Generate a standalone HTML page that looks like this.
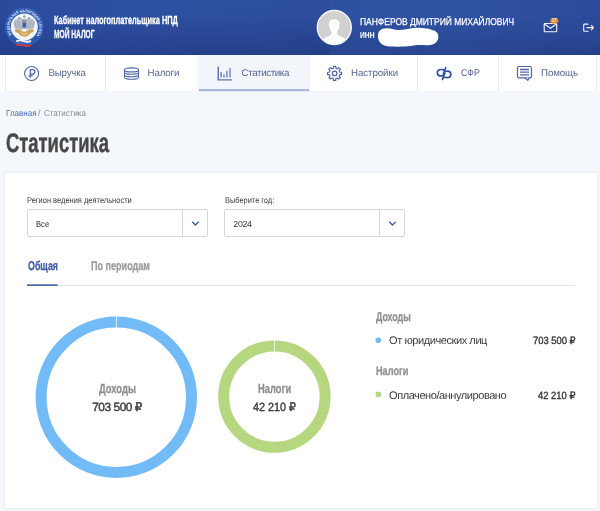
<!DOCTYPE html>
<html lang="ru">
<head>
<meta charset="utf-8">
<title>Статистика</title>
<style>
*{box-sizing:border-box;margin:0;padding:0}
html,body{width:600px;height:511px;overflow:hidden;background:#f4f7fb;font-family:"Liberation Sans","DejaVu Sans",sans-serif}
.a{position:absolute}
.t{position:absolute;white-space:nowrap;transform-origin:0 0;text-rendering:geometricPrecision}
.hdr{left:0;top:0;width:600px;height:55px;background:linear-gradient(180deg,rgba(24,40,105,0) 30%,rgba(24,40,105,.30) 100%),linear-gradient(168deg,rgba(30,50,120,0) 35%,rgba(24,40,105,.22) 100%) 0 0/330px 55px no-repeat,linear-gradient(90deg,#2a499b 0%,#2d4ea1 12%,#2e51a2 35%,#2f52a1 78%,#2b4b9a 100%)}
.nav{left:0;top:55px;width:600px;height:36px;background:#fff}
.dv{top:55px;width:1px;height:36px;background:#e8ecf2}
.act{left:198.5px;top:55px;width:110px;height:36.3px;background:#f2f5fa;border-bottom:2px solid #a9b7d9;box-shadow:0 0 2px rgba(60,80,130,.25)}
.card{left:5px;top:173px;width:591.5px;height:334.5px;background:#fff;box-shadow:0 0 3px rgba(100,120,160,.12)}
.sel{top:209px;height:28px;border:1px solid #d5d8dd;border-radius:2px;background:#fff}
.sel i{position:absolute;right:24.5px;top:0;width:1px;height:26px;background:#d5d8dd}
.tl{position:absolute;left:0;top:0;width:600px;height:511px;will-change:transform}
</style>
</head>
<body>
<div class="a hdr"></div>
<svg class="a" style="left:0;top:0" width="600" height="55" viewBox="0 0 600 55">
  <!-- logo -->
  <g>
    <circle cx="24.300" cy="27" r="18.800" fill="#2c59b0" stroke="#4f77c6" stroke-width="0.500"/>
    <circle cx="24.300" cy="27" r="13.500" fill="#f3f5f9"/>
    <path id="lp" d="M 11.800 34.800 A 14.700 14.700 0 1 1 36.800 34.800" fill="none"/>
    <text font-family="Liberation Sans, sans-serif" font-size="4" font-weight="bold" fill="#dfe7f8" textLength="63" lengthAdjust="spacingAndGlyphs"><textPath href="#lp" startOffset="0" textLength="63" lengthAdjust="spacingAndGlyphs">ФЕДЕРАЛЬНАЯ НАЛОГОВАЯ СЛУЖБА</textPath></text>
    <!-- eagle: wings -->
    <g id="wing">
      <path d="M23 20.600 C22.300 18.500 21 17.300 19.300 17.200 L17.700 18.300 L19.500 19.100 C17 18.300 14.700 19.300 13.700 21.500 C13.400 24.500 14.200 27.700 16 30.200 L17.500 28.300 L18.200 30.800 L20 29.100 L20.800 31 L23 29 Z" fill="#bfc3cc"/>
      <path d="M15.400 21.700 C15.200 24.300 15.800 26.600 17 28.300 M17.500 20.800 C17.300 23.800 18 26.600 19.300 28.700 M19.700 20.900 C19.600 23.800 20.200 26.600 21.300 28.700" fill="none" stroke="#858c9a" stroke-width="0.550"/>
      <circle cx="19.300" cy="18.300" r="1.300" fill="#a4aab6"/>
    </g>
    <use href="#wing" transform="translate(48.600 0) scale(-1 1)"/>
    <path d="M23 16.300 l1.300 -1.600 l1.300 1.600 l-.3 1.800 h-2z" fill="#9aa1ae"/>
    <path d="M21.900 19.300 h4.800 v8.200 q-2.400 2.600 -4.800 0z" fill="#9199a9"/>
    <path d="M22.700 22.700 h3.200 v3.900 q-1.600 1.800 -3.200 0z" fill="#3e5ea3"/>
    <!-- eagle: gold -->
    <path d="M14.500 30.400 q2.300 -1.700 4.700 -.6 l2.100 1.300 q3 1.200 6 0 l2.100 -1.300 q2.400 -1.100 4.700 .6 q-1 2.300 -3.900 2.500 l-1.700 2.700 q-4.200 2.200 -8.400 0 l-1.700 -2.700 q-2.900 -.2 -3.900 -2.500z" fill="#c9a355"/>
    <path d="M20.300 32 q4 1.700 8 0 l-1 2.700 q-3 1.200 -6 0z" fill="#ddbd78"/>
    <!-- ribbon -->
    <path d="M16.300 40.100 q3.700 -1.400 7.400 0 t7.400 0 v2.100 q-3.700 1.400 -7.400 0 t-7.400 0z" fill="#f4f4f6"/>
    <path d="M16.300 42.200 q3.700 -1.400 7.400 0 t7.400 0 v2 q-3.700 1.400 -7.400 0 t-7.400 0z" fill="#3565c4"/>
    <path d="M16.300 44.200 q3.700 -1.400 7.400 0 t7.400 0 v2.100 q-3.700 1.400 -7.400 0 t-7.400 0z" fill="#c63d40"/>
  </g>
  <!-- avatar -->
  <g>
    <clipPath id="ac"><circle cx="334.300" cy="27.500" r="16.500"/></clipPath>
    <circle cx="334.300" cy="27.500" r="17" fill="#d1d1d1" stroke="#fbfbfb" stroke-width="1.300"/>
    <g clip-path="url(#ac)" fill="#fcfcfc">
      <path d="M329 25 C328.700 21 330.500 19.300 334.300 19.300 C338.100 19.300 339.900 21 339.600 25 C339.400 28 338.500 30 337.300 31.200 L337.300 33.600 C337.300 35 338.500 35.700 340.500 36.600 C344 38 346.500 39.500 347.500 42 L347.500 46 L321 46 L321 42 C322 39.500 324.500 38 328 36.600 C330 35.700 331.300 35 331.300 33.600 L331.300 31.200 C330.100 30 329.200 28 329 25 Z"/>
    </g>
  </g>
  <!-- redaction blob -->
  <path d="M378 37 C377.500 31 381 28 387 28.200 C392 28.300 396 30.500 400 30 C406 29.300 412 27.500 419 27.700 C427 27.900 431 29.500 434 30.500 C438 32 438.500 35 438.300 37.500 C438 41.500 435 44.500 430 45 C424 45.600 420 44.500 414 45.500 C406 46.800 398 46.800 390 46.500 C383 46.300 378.500 43 378 37 Z" fill="#fff"/>
  <!-- mail -->
  <g fill="none" stroke="#f4f6fb" stroke-width="1.100" stroke-linejoin="round">
    <rect x="544.200" y="23.500" width="12.500" height="8.300" rx="0.800"/>
    <path d="M544.500 24 l5.950 4.200 l5.950 -4.200"/>
  </g>
  <rect x="550.200" y="18" width="8.200" height="5.600" rx="2.800" fill="#dd8138"/>
  <text x="554.300" y="22.400" font-family="Liberation Sans, sans-serif" font-size="4.600" font-weight="bold" fill="#fbe9d9" text-anchor="middle">27</text>
  <!-- logout -->
  <path d="M588 24.100 h-3.500 q-.8 0 -.8 .8 v5.500 q0 .8 .8 .8 h3.500 M587 27.650 h6.200 M591.400 25.500 l2.150 2.150 l-2.150 2.150" fill="none" stroke="#f4f6fb" stroke-width="1.100" stroke-linecap="round" stroke-linejoin="round"/>
</svg>
<div class="a nav"></div>
<div class="a dv" style="left:5px"></div>
<div class="a dv" style="left:104.500px"></div>
<div class="a dv" style="left:417px"></div>
<div class="a dv" style="left:498px"></div>
<div class="a dv" style="left:596px"></div>
<div class="a act"></div>
<svg class="a" style="left:0;top:55px" width="600" height="37" viewBox="0 55 600 37" fill="none" stroke="#4f66a6" stroke-width="1.100">
  <!-- ruble -->
  <circle cx="31.600" cy="73.500" r="7"/>
  <path d="M30.300 77.700 v-8 h2.300 a2.200 2.200 0 0 1 0 4.400 h-2.300 M28.500 75.900 h4.300" stroke-width="1.200"/>
  <!-- coins -->
  <g>
    <ellipse cx="131.500" cy="69.900" rx="7" ry="2"/>
    <path d="M124.500 69.900 v7.300 M138.500 69.900 v7.300 M124.500 72.300 a7 2 0 0 0 14 0 M124.500 74.750 a7 2 0 0 0 14 0 M124.500 77.200 a7 2 0 0 0 14 0"/>
  </g>
  <!-- chart -->
  <path d="M218.250 66.400 V79.850 H232" stroke="#5a6fae" stroke-width="1.400"/>
  <path d="M221.100 77.600 V72 M224 77.600 V74.300 M226.900 77.600 V70.700 M230 77.600 V68.100" stroke="#8493c6" stroke-width="1.700"/>
  <!-- gear -->
  <circle cx="334.600" cy="73.400" r="2.300" stroke-width="1.200"/>
  <path d="M333.32 68.26 L333.43 66.40 L335.77 66.40 L335.88 68.26 L337.33 68.86 L338.73 67.62 L340.38 69.27 L339.14 70.67 L339.74 72.12 L341.60 72.23 L341.60 74.57 L339.74 74.68 L339.14 76.13 L340.38 77.53 L338.73 79.18 L337.33 77.94 L335.88 78.54 L335.77 80.40 L333.43 80.40 L333.32 78.54 L331.87 77.94 L330.47 79.18 L328.82 77.53 L330.06 76.13 L329.46 74.68 L327.60 74.57 L327.60 72.23 L329.46 72.12 L330.06 70.67 L328.82 69.27 L330.47 67.62 L331.87 68.86Z" stroke-linejoin="round" stroke-width="1.150"/>
  <!-- sfr -->
  <g stroke="#2d4e9f" stroke-width="1.700" stroke-linecap="round" stroke-linejoin="round">
    <path id="sfh" d="M445.700 67.700 L443.400 73.700 M444.600 70.500 C443.600 69.800 442.400 69.500 441.200 69.500 C438.800 69.500 437.400 70.900 437.400 72.700 C437.400 74.600 438.800 76 440.700 76 C441.500 76 442.200 75.800 442.800 75.500"/>
    <use href="#sfh" transform="rotate(180 444.100 73.550)"/>
  </g>
  <!-- help -->
  <rect x="517.500" y="66.500" width="14" height="11.300" rx="1.300" stroke-width="1.200"/>
  <path d="M524.800 77.800 L527.800 80.300 L529.300 77.800" stroke-width="1.200" stroke-linejoin="round" fill="#fff"/>
  <path d="M520 69.500 h9 M520 72.200 h9 M520 74.900 h9" stroke-width="1.300"/>
</svg>
<div class="a card"></div>
<div class="a sel" style="left:27px;width:181px"><i></i></div>
<div class="a sel" style="left:224px;width:181px"><i></i></div>
<svg class="a" style="left:0;top:173px" width="600" height="338" viewBox="0 173 600 338" fill="none">
  <path d="M192.200 221.800 l3.250 3.250 l3.250 -3.250 M389.200 221.800 l3.250 3.250 l3.250 -3.250" stroke="#40609f" stroke-width="1.400"/>
  <rect x="27" y="285" width="548.300" height="1" fill="#e2e3e6"/>
  <rect x="27" y="284.300" width="30.600" height="1.700" fill="#4a67a8"/>
  <circle cx="116.300" cy="397.200" r="75.200" stroke="#72bbf6" stroke-width="11"/>
  <rect x="115.900" y="316" width="0.800" height="11.500" fill="#fff"/>
  <circle cx="274.400" cy="396.600" r="50.700" stroke="#b6d680" stroke-width="11"/>
  <rect x="274" y="340" width="0.800" height="11.500" fill="#fff"/>
  <circle cx="378.300" cy="340.200" r="2.800" fill="#72bbf6"/>
  <circle cx="378.300" cy="394.400" r="2.800" fill="#b6d680"/>
</svg>

<div class="tl">
<div class="t" style="left:54.4px;top:15.00px;font-size:11.63px;line-height:11.63px;font-weight:bold;color:#fff;transform:scaleX(0.635);-webkit-text-stroke:.3px #fff">Кабинет налогоплательщика НПД</div>
<div class="t" style="left:54.4px;top:29.00px;font-size:11.63px;line-height:11.63px;font-weight:bold;color:#fff;transform:scaleX(0.570);-webkit-text-stroke:.3px #fff">МОЙ НАЛОГ</div>
<div class="t" style="left:360.2px;top:18.00px;font-size:9.88px;line-height:9.88px;font-weight:normal;color:#fff;transform:scaleX(0.857);-webkit-text-stroke:.25px #fff">ПАНФЕРОВ ДМИТРИЙ МИХАЙЛОВИЧ</div>
<div class="t" style="left:360.2px;top:31.00px;font-size:8.72px;line-height:8.72px;font-weight:bold;color:#fff;transform:scaleX(0.774);">ИНН</div>
<div class="t" style="left:48.6px;top:69.00px;font-size:9.74px;line-height:9.74px;font-weight:normal;color:#58668f;letter-spacing:-0.232px;">Выручка</div>
<div class="t" style="left:147.6px;top:69.00px;font-size:9.74px;line-height:9.74px;font-weight:normal;color:#58668f;letter-spacing:-0.157px;">Налоги</div>
<div class="t" style="left:241.6px;top:69.00px;font-size:9.74px;line-height:9.74px;font-weight:normal;color:#58668f;letter-spacing:-0.372px;">Статистика</div>
<div class="t" style="left:351.0px;top:69.00px;font-size:9.74px;line-height:9.74px;font-weight:normal;color:#58668f;letter-spacing:-0.082px;">Настройки</div>
<div class="t" style="left:460.5px;top:69.00px;font-size:9.74px;line-height:9.74px;font-weight:normal;color:#58668f;transform:scaleX(0.903);">СФР</div>
<div class="t" style="left:541.0px;top:69.00px;font-size:9.74px;line-height:9.74px;font-weight:normal;color:#58668f;letter-spacing:-0.102px;">Помощь</div>
<div class="t" style="left:5.5px;top:109.00px;font-size:8.72px;line-height:8.72px;font-weight:normal;color:#4a6cb3;transform:scaleX(0.919);">Главная</div>
<div class="t" style="left:38.0px;top:109.00px;font-size:8.72px;line-height:8.72px;font-weight:normal;color:#8a8a8a;letter-spacing:0.062px;">/</div>
<div class="t" style="left:44.0px;top:109.00px;font-size:8.72px;line-height:8.72px;font-weight:normal;color:#8a8a8a;transform:scaleX(0.917);">Статистика</div>
<div class="t" style="left:6.2px;top:130.00px;font-size:27.03px;line-height:27.03px;font-weight:bold;color:#474747;transform:scaleX(0.682);-webkit-text-stroke:.45px #474747">Статистика</div>
<div class="t" style="left:27.2px;top:196.00px;font-size:8.43px;line-height:8.43px;font-weight:normal;color:#3a3a3a;transform:scaleX(0.889);">Регион ведения деятельности</div>
<div class="t" style="left:225.0px;top:196.00px;font-size:8.43px;line-height:8.43px;font-weight:normal;color:#3a3a3a;transform:scaleX(0.880);">Выберите год:</div>
<div class="t" style="left:35.8px;top:220.00px;font-size:8.72px;line-height:8.72px;font-weight:normal;color:#333;transform:scaleX(0.878);">Все</div>
<div class="t" style="left:233.3px;top:220.00px;font-size:8.72px;line-height:8.72px;font-weight:normal;color:#333;letter-spacing:-0.252px;">2024</div>
<div class="t" style="left:27.6px;top:260.00px;font-size:12.79px;line-height:12.79px;font-weight:bold;color:#3d5c9e;transform:scaleX(0.692);-webkit-text-stroke:.3px #3d5c9e">Общая</div>
<div class="t" style="left:91.0px;top:260.00px;font-size:12.79px;line-height:12.79px;font-weight:bold;color:#9b9b9b;transform:scaleX(0.708);-webkit-text-stroke:.3px #9b9b9b">По периодам</div>
<div class="t" style="left:98.5px;top:382.00px;font-size:13.23px;line-height:13.23px;font-weight:bold;color:#8e8e8e;transform:scaleX(0.712);-webkit-text-stroke:.3px #8e8e8e">Доходы</div>
<div class="t" style="left:92.2px;top:402.00px;font-size:11.92px;line-height:11.92px;font-weight:normal;color:#3a3a3a;letter-spacing:-0.458px;-webkit-text-stroke:.4px #3a3a3a">703 500 ₽</div>
<div class="t" style="left:257.8px;top:382.00px;font-size:13.23px;line-height:13.23px;font-weight:bold;color:#8e8e8e;transform:scaleX(0.709);-webkit-text-stroke:.3px #8e8e8e">Налоги</div>
<div class="t" style="left:252.6px;top:402.00px;font-size:11.92px;line-height:11.92px;font-weight:normal;color:#3a3a3a;transform:scaleX(0.909);-webkit-text-stroke:.4px #3a3a3a">42 210 ₽</div>
<div class="t" style="left:376.0px;top:311.00px;font-size:12.65px;line-height:12.65px;font-weight:bold;color:#8f8f8f;transform:scaleX(0.699);-webkit-text-stroke:.3px #8f8f8f">Доходы</div>
<div class="t" style="left:389.0px;top:336.00px;font-size:11.05px;line-height:11.05px;font-weight:normal;color:#3b3b3b;letter-spacing:-0.439px;">От юридических лиц</div>
<div class="t" style="left:533.0px;top:337.00px;font-size:10.47px;line-height:10.47px;font-weight:normal;color:#333;transform:scaleX(0.898);-webkit-text-stroke:.35px #333">703 500 ₽</div>
<div class="t" style="left:376.0px;top:365.00px;font-size:12.5px;line-height:12.5px;font-weight:bold;color:#8f8f8f;transform:scaleX(0.732);-webkit-text-stroke:.3px #8f8f8f">Налоги</div>
<div class="t" style="left:389.0px;top:391.00px;font-size:11.05px;line-height:11.05px;font-weight:normal;color:#3b3b3b;letter-spacing:-0.457px;">Оплачено/аннулировано</div>
<div class="t" style="left:538.2px;top:392.00px;font-size:10.47px;line-height:10.47px;font-weight:normal;color:#333;transform:scaleX(0.899);-webkit-text-stroke:.35px #333">42 210 ₽</div>
</div>
</body>
</html>
